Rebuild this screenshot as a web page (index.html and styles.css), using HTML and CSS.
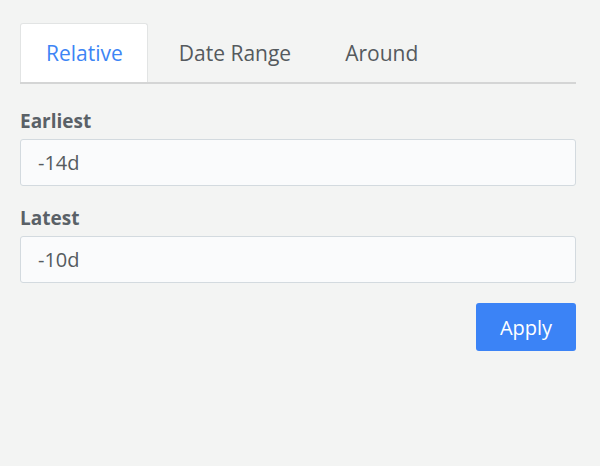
FILE: index.html
```html
<!DOCTYPE html>
<html>
<head>
<meta charset="utf-8">
<link rel="stylesheet" href="styles.css">
</head>
<body>
<div class="panel">
  <div class="tabs">
    <div class="tab active">Relative</div>
    <div class="tab">Date Range</div>
    <div class="tab">Around</div>
  </div>
  <div class="field first">
    <label class="label">Earliest</label>
    <div class="input">-14d</div>
  </div>
  <div class="field">
    <label class="label">Latest</label>
    <div class="input">-10d</div>
  </div>
  <div class="actions">
    <button class="btn">Apply</button>
  </div>
</div>
</body>
</html>
```
FILE: styles.css
```css
html, body {
  margin: 0;
  padding: 0;
  background: #f3f4f3;
  font-family: "Open Sans", "Noto Sans", sans-serif;
}
.panel {
  width: 556px;
  padding: 23px 24px 0 20px;
}
.tabs {
  display: flex;
  border-bottom: 2px solid #d4d5d5;
}
.tab {
  height: 59px;
  box-sizing: border-box;
  padding: 0 27px;
  display: flex;
  align-items: center;
  font-size: 21px;
  color: #555a5e;
}
.tab.active {
  background: #ffffff;
  border: 1px solid #e2e4e4;
  border-bottom: none;
  border-radius: 3px 3px 0 0;
  color: #3d85f5;
  padding: 0 24px 0 25px;
  margin-right: 4px;
}
.field {
  display: flex;
  flex-direction: column;
  margin-top: 20px;
}
.field.first {
  margin-top: 25px;
}
.label {
  font-size: 19px;
  font-weight: 700;
  color: #5a6167;
  line-height: 24px;
  margin-bottom: 6px;
}
.input {
  height: 47px;
  box-sizing: border-box;
  border: 1px solid #d3dadf;
  border-radius: 3px;
  background: #fafbfc;
  padding: 0 17px;
  display: flex;
  align-items: center;
  font-size: 20px;
  color: #565b5f;
}
.actions {
  display: flex;
  justify-content: flex-end;
  margin-top: 20px;
}
.btn {
  width: 100px;
  height: 48px;
  border: none;
  border-radius: 3px;
  background: #3b83f6;
  color: #ffffff;
  font-family: "Open Sans", "Noto Sans", sans-serif;
  font-size: 20px;
  padding: 0;
}
```
